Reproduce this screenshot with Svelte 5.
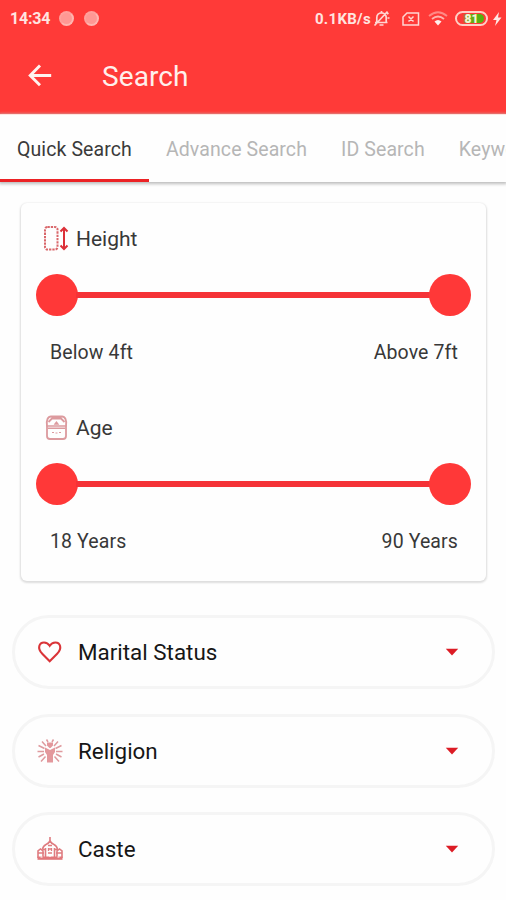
<script>
  const tabs = [
    { label: 'Quick Search', active: true },
    { label: 'Advance Search' },
    { label: 'ID Search' },
    { label: 'Keyword Search' }
  ];
  const ranges = [
    { icon: 'height', title: 'Height', min: 'Below 4ft', max: 'Above 7ft' },
    { icon: 'age', title: 'Age', min: '18 Years', max: '90 Years' }
  ];
  const filters = [
    { icon: 'heart', label: 'Marital Status' },
    { icon: 'religion', label: 'Religion' },
    { icon: 'caste', label: 'Caste' }
  ];
</script>

<div class="screen">
  <header>
    <div class="status">
      <span class="time">14:34</span>
      <i class="dot"></i><i class="dot"></i>
      <span class="speed">0.1KB/s</span>
      <svg class="bell" width="17" height="17" viewBox="0 0 17 17" fill="none" stroke="#ffd6d3" stroke-width="1.7">
        <path d="M2 12.500h12.500M3.800 12V7.500a4.700 4.700 0 0 1 9.400 0V12M6.500 15h4M8.500 1v2M1.500 15.500 14.500 1.500M14 4l1.500-1M14.500 8h2" />
      </svg>
      <svg class="sim" width="18" height="14" viewBox="0 0 18 14" fill="none" stroke="#ffd6d3" stroke-width="1.500">
        <path d="M5 1h11.500v12h-15.500V5zM6.500 4.500l5 5M11.500 4.500l-5 5" />
      </svg>
      <svg class="wifi" width="20" height="15" viewBox="0 0 20 15" fill="none" stroke-width="1.800">
        <path d="M1 5q9-7.500 18 0" stroke="#ff8985" />
        <path d="M4 8q6-5 12 0" stroke="#ffb5b0" />
        <path d="M6.500 10.500q3.500-3 7 0L10 14.500z" fill="#fff0ed" />
      </svg>
      <span class="battery"><b>81</b></span>
      <svg class="bolt" width="10" height="14" viewBox="0 0 10 14"><path d="M7 0 1 8h3.500L3 14l6.500-8.500H6z" fill="#ffe8e4" /></svg>
    </div>
    <div class="bar">
      <svg width="24" height="24" viewBox="0 0 24 24" fill="none" stroke="#fff3ef" stroke-width="2.900">
        <path d="M23.200 11.500H3M12 1.500 2.200 11.500l9.800 9.800" />
      </svg>
      <h1>Search</h1>
    </div>
  </header>

  <nav>
    {#each tabs as tab}
      <span class:active={tab.active}>{tab.label}</span>
    {/each}
  </nav>

  <section class="card">
    {#each ranges as r}
      <div class="range">
        <div class="title">
          {#if r.icon === 'height'}
            <svg width="26" height="26" viewBox="0 0 26 26" fill="none" stroke="#d9676b">
              <rect x="2" y="1" width="12.500" height="22.500" rx="2.500" stroke-width="2" stroke-dasharray="2.300 1" />
              <path d="M21 3v19M17.500 5.500 21 2l3.500 3.500M17.500 19.500 21 23l3.500-3.500" stroke="#dc3038" stroke-width="2" />
            </svg>
          {:else}
            <svg width="26" height="26" viewBox="0 0 26 26" fill="none" stroke="#dc9a9e" stroke-width="1.800">
              <path d="M4 11C3 5 5 1.500 8 1.500h11c3 0 5 3.500 4 9.500M5.500 7 9 3.500h9l3.500 3.500" />
              <path d="M4 10.500V21q0 3 3 3h13q3 0 3-3V10.500" />
              <path d="M3.500 11h20M5 13.300h17" stroke-width="1.400" />
              <path d="M12 9 13.500 7l1.500 2z" stroke-width="1.300" />
              <path d="M9 17.500h2M16 17.500h2M12.500 18h2" stroke-width="1" />
            </svg>
          {/if}
          <span>{r.title}</span>
        </div>
        <div class="slider"><i></i><b></b><i></i></div>
        <div class="ends"><span>{r.min}</span><span>{r.max}</span></div>
      </div>
    {/each}
  </section>

  <div class="filters">
    {#each filters as f}
      <div class="pill">
        {#if f.icon === 'heart'}
          <svg width="26" height="24" viewBox="0 0 26 24" fill="none" stroke="#da3438" stroke-width="2.100">
            <path d="M12.700 21.300 5.500 14C-.5 8 2.500 2.500 7 2.500c3 0 4.700 1.700 5.700 3.300 1-1.600 2.700-3.300 5.700-3.300 4.500 0 7.500 5.500 1.500 11.500z" />
          </svg>
        {:else if f.icon === 'religion'}
          <svg width="26" height="24" viewBox="0 0 26 24" fill="none" stroke="#df9a9e" stroke-width="1.500">
            <path d="M9.500.500 11 3M16.500.500 15 3M5 2.500 9 7M21 2.500 17 7M1.500 6.500l6 3M24.500 6.500l-6 3M.5 12.500H7M19 12.500h6.500M1.500 18 7 15M24.500 18 19 15M4 22.500l4.500-5M22 22.500l-4.500-5" />
            <path d="M10 3.500h6v3L13.500 9h-1L10 6.500zM8 8.500l5 2.500 5-2.500V13l-2 3v7.500h-6V16l-2-3z" fill="#e3989c" stroke="none" />
          </svg>
        {:else}
          <svg width="26" height="24" viewBox="0 0 26 24" fill="none" stroke="#df7c80" stroke-width="1.600">
            <path d="M13 0v5M5.500 12.500q.5-3.500 3.500-5 3-1 4-4 1 3 4 4 3 1.500 3.500 5M1 21v-7l2.500-2L6 14v7M20 21v-7l2.500-2 2.500 2v7M8.500 11v10M17.500 11v10" />
            <path d="M11 8.500h4M1 16h6M19 16h6M11 12h4M11.500 11v3M14.500 11v3M11 16h4M6 12.500h3M17 12.500h3" stroke-width="1.300" />
            <path d="M.5 19.500h25v3.300H.5z" fill="#e2777b" stroke="none" />
            <path d="M3.500 20h2M20.500 20h2M12 19h2" stroke="#fff" stroke-width="1" />
          </svg>
        {/if}
        <span>{f.label}</span>
        <svg class="caret" width="14" height="8" viewBox="0 0 14 8"><path d="M.8.800h12.400L7 7.500z" fill="#dc1c25" /></svg>
      </div>
    {/each}
  </div>
</div>

<style>
  :global(body) { margin: 0; }
  .screen {
    width: 506px;
    height: 900px;
    overflow: hidden;
    background: #fefefe;
    font-family: Roboto, "Liberation Sans", sans-serif;
    color: #383838;
  }
  header { height: 114px; background: #ff3a38; }
  .status {
    height: 37px;
    box-sizing: border-box;
    padding: 0 4px 0 10px;
    display: flex;
    align-items: center;
    color: #ffe4e0;
    font-weight: 700;
  }
  .time { width: 49px; font-size: 16px; letter-spacing: -.2px; }
  .dot {
    width: 11px;
    height: 11px;
    margin-right: 10px;
    border: 2px solid #ffb6b0;
    border-top-color: #ffa09c;
    border-left-color: #ffa09c;
    border-radius: 50%;
    background: #ff9894;
  }
  .speed { margin-left: auto; font-size: 15px; letter-spacing: .3px; white-space: nowrap; }
  .bell { margin-left: 2px; }
  .sim { margin-left: 12px; }
  .wifi { margin-left: 8px; }
  .battery {
    width: 29px;
    height: 11px;
    margin-left: 7px;
    border: 2px solid #ffd0c5;
    border-radius: 8px;
    display: flex;
    align-items: center;
    justify-content: center;
  }
  .battery b {
    width: 24px;
    height: 9px;
    border-radius: 5px;
    background: linear-gradient(90deg, #ff3a38 10%, #70a61d 30%, #51b30e 92%);
    color: #f4f5d5;
    font-size: 12px;
    line-height: 10px;
    text-align: center;
  }
  .bolt { margin-left: 4px; }
  .bar {
    height: 77px;
    display: flex;
    align-items: center;
    padding-left: 28px;
    color: #fff0ec;
  }
  h1 { margin: 2px 0 0 50px; font-size: 28px; font-weight: 400; line-height: 36px; letter-spacing: .1px; }
  nav {
    height: 68px;
    display: flex;
    border-top: 1px solid #ffe5e0;
    box-sizing: border-box;
    background: #fefefe;
    box-shadow: 0 1px 3px 1px #bdbdbd;
    position: relative;
    white-space: nowrap;
  }
  nav span {
    box-sizing: border-box;
    height: 67px;
    padding: 0 17px;
    line-height: 70px;
    font-size: 19.500px;
    letter-spacing: .1px;
    color: #b6b6b6;
    flex: none;
  }
  nav .active { color: #3a3a3a; border-bottom: 3px solid #ec2225; }
  .card {
    margin: 21px 20px 0 21px;
    height: 378px;
    box-sizing: border-box;
    padding: 20px 15px 0;
    border-radius: 6px;
    background: #fefefe;
    box-shadow: 0 1px 2px 1px #dedede;
  }
  .range { height: 189px; }
  .title { height: 32px; display: flex; align-items: center; padding-left: 7px; font-size: 21px; }
  .title span { margin-left: 7px; }
  .slider { display: flex; align-items: center; height: 42px; margin-top: 19px; }
  .slider i { width: 42px; height: 42px; border-radius: 50%; background: #ff3838; flex: none; }
  .slider b { flex: 1; height: 6px; margin: 0 -2px; background: #f53237; }
  .ends {
    display: flex;
    justify-content: space-between;
    margin-top: 25px;
    padding: 0 13px 0 14px;
    font-size: 19.500px;
    line-height: 24px;
    letter-spacing: .12px;
  }
  .filters { margin: 34px 11px 0 12px; display: flex; flex-direction: column; gap: 24.500px; }
  .pill {
    height: 74px;
    box-sizing: border-box;
    border: 3px solid #f5f5f5;
    border-radius: 37px;
    display: flex;
    align-items: center;
    padding: 0 33px 0 22px;
    color: #161616;
    font-size: 22.400px;
  }
  .pill span { margin-left: 15px; }
  .caret { margin-left: auto; }
</style>
